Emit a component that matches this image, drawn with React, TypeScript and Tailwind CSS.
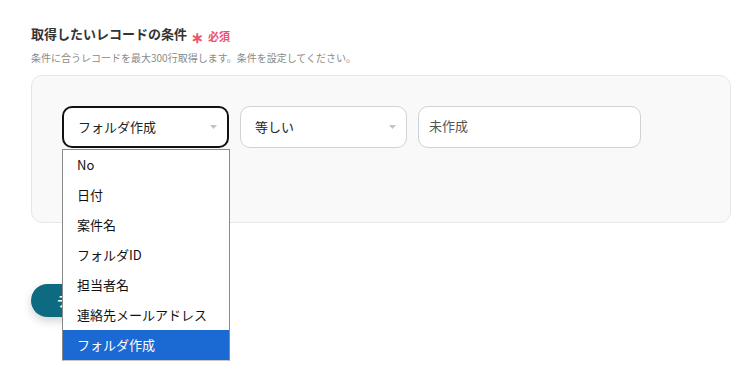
const FONT = '"Noto Sans CJK JP", "Noto Sans", sans-serif';

const options = ["No", "日付", "案件名", "フォルダID", "担当者名", "連絡先メールアドレス", "フォルダ作成"];

/* -------------------- Small bits -------------------- */

function Caret() {
  return (
    <svg width="7" height="4" viewBox="0 0 7 4" className="shrink-0">
      <path d="M0 0 L7 0 L3.5 4 Z" fill="#c4c4c4" />
    </svg>
  );
}

function SelectBox({ value, active, width }: { value: string; active?: boolean; width: string }) {
  return (
    <div
      className={`${width} h-[42px] flex items-center justify-between pl-[14px] pr-[10px] bg-white rounded-[10px] text-[13px] text-[#222] ${
        active ? "border-2 border-[#111]" : "border border-[#cfd3d8]"
      }`}
    >
      <span>{value}</span>
      <Caret />
    </div>
  );
}

/* -------------------- Page -------------------- */

export default function App() {
  return (
    <div className="w-[754px] h-[379px] bg-white relative overflow-hidden pl-[31px] pt-[24px]" style={{ fontFamily: FONT }}>
      <div className="flex items-start gap-[4px] h-[20px] leading-[20px]">
        <span className="text-[13px] font-bold text-[#333]">取得したいレコードの条件</span>
        <span className="text-[15px] text-[#f0506e] font-bold pt-[3px] leading-[20px]">∗</span>
        <span className="text-[11px] font-bold text-[#f0506e] pt-[2px] leading-[20px]">必須</span>
      </div>
      <div className="mt-[6px] text-[10px] text-[#8a8a8a] h-[15px] leading-[15px]">
        条件に合うレコードを最大300行取得します。条件を設定してください。
      </div>

      {/* Condition panel */}
      <div className="mt-[10px] w-[700px] h-[148px] rounded-[11px] border border-[#e6e7e9] bg-[#f9f9f9] pl-[30px] pt-[30px]">
        <div className="flex gap-[11px]">
          <SelectBox value="フォルダ作成" active width="w-[167px]" />
          <SelectBox value="等しい" width="w-[167px]" />
          <div className="w-[223px] h-[42px] bg-white border border-[#cfd3d8] rounded-[10px] pl-[10px] pt-[10px] text-[13px] text-[#555] leading-[18px]">
            未作成
          </div>
        </div>
      </div>

      <button className="mt-[61px] h-[33px] w-[190px] rounded-full bg-[#0e6a80] text-white text-[13px] font-bold pl-[26px] text-left shadow-[0_4px_10px_rgba(0,0,0,0.18)]">
        テスト
      </button>

      {/* Open dropdown list */}
      <div className="absolute left-[62px] top-[149px] w-[168px] bg-white border border-[#8a8a8a] border-b-[#c8c8c8]">
        {options.map((o, i) => (
          <div
            key={o}
            className={`h-[30px] flex items-center pl-[14px] text-[13px] ${
              i === options.length - 1 ? "bg-[#1b69d2] text-white" : "text-[#111]"
            }`}
          >
            {o}
          </div>
        ))}
      </div>
    </div>
  );
}
